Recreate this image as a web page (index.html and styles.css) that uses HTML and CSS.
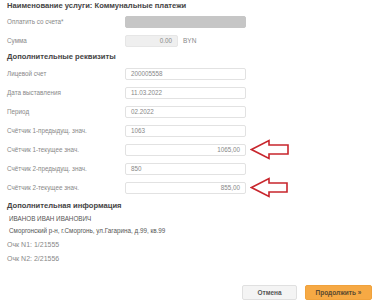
FILE: index.html
```html
<!DOCTYPE html>
<html lang="ru">
<head>
    <meta charset="UTF-8">
    <title>Коммунальные платежи</title>
    <link rel="stylesheet" href="styles.css">
</head>
<body>
    <div class="page">
        <h1 class="title">Наименование услуги: Коммунальные платежи</h1>

        <div class="row">
            <label>Оплатить со счета*</label>
            <div class="field field-select"></div>
        </div>
        <div class="row">
            <label>Сумма</label>
            <div class="field field-sum">0.00</div>
            <span class="currency">BYN</span>
        </div>

        <h2 class="section">Дополнительные реквизиты</h2>

        <div class="row">
            <label>Лицевой счет</label>
            <div class="field">200005558</div>
        </div>
        <div class="row">
            <label>Дата выставления</label>
            <div class="field">11.03.2022</div>
        </div>
        <div class="row">
            <label>Период</label>
            <div class="field">02.2022</div>
        </div>
        <div class="row">
            <label>Счётчик 1-предыдущ. знач.</label>
            <div class="field">1063</div>
        </div>
        <div class="row">
            <label>Счётчик 1-текущее знач.</label>
            <div class="field field-num">1065,00</div>
            <svg class="arrow" width="40" height="21" viewBox="0 0 40 21">
                <polygon points="1.5,10.5 19,1.5 19,6 38,6 38,15 19,15 19,19.5" />
            </svg>
        </div>
        <div class="row">
            <label>Счётчик 2-предыдущ. знач.</label>
            <div class="field">850</div>
        </div>
        <div class="row">
            <label>Счётчик 2-текущее знач.</label>
            <div class="field field-num">855,00</div>
            <svg class="arrow" width="40" height="21" viewBox="0 0 40 21">
                <polygon points="1.5,10.5 19,1.5 19,6 37,6 37,15 19,15 19,19.5" />
            </svg>
        </div>

        <h2 class="section section-info">Дополнительная информация</h2>
        <div class="info">
            <p class="info-line">ИВАНОВ ИВАН ИВАНОВИЧ</p>
            <p class="info-line">Сморгонский р-н, г.Сморгонь, ул.Гагарина, д.99, кв.99</p>
        </div>
        <p class="counter">Очк N1: 1/21555</p>
        <p class="counter">Очк N2: 2/21556</p>

        <div class="actions">
            <button type="button" class="btn btn-cancel">Отмена</button>
            <button type="button" class="btn btn-next">Продолжить »</button>
        </div>
    </div>
</body>
</html>
```

FILE: styles.css
```css
body {
    margin: 0;
    padding: 0;
    background: #fff;
    font-family: "Liberation Sans", Arial, sans-serif;
    color: #777;
}
.page {
    padding: 0 8px 0 7px;
}
.title, .section {
    margin: 0;
    font-size: 7.6px;
    font-weight: bold;
    color: #444;
}
.title {
    height: 12px;
    line-height: 12px;
}
.section {
    height: 14px;
    line-height: 14px;
    margin-top: 0;
}
.row {
    display: flex;
    align-items: center;
    height: 19px;
}
.row label {
    width: 118px;
    font-size: 6.3px;
    color: #888;
}
.field {
    box-sizing: border-box;
    width: 121px;
    height: 12px;
    line-height: 10px;
    padding: 0 5px;
    border: 1px solid #e2e2e2;
    border-radius: 2px;
    background: #fff;
    font-size: 6.3px;
    color: #888;
}
.field-select {
    background: #c6c6c6;
    border-color: #c6c6c6;
}
.field-sum {
    width: 53px;
    background: #efefef;
    border-color: #e6e6e6;
    text-align: right;
}
.field-num {
    text-align: right;
}
.currency {
    margin-left: 5px;
    font-size: 6.5px;
    color: #888;
}
.arrow {
    margin-left: 4px;
}
.arrow polygon {
    fill: #fff;
    stroke: #c8262d;
    stroke-width: 1.6;
    stroke-linejoin: miter;
}
.section-info {
    margin-top: 2px;
}
.info {
    padding-left: 2px;
}
.info-line {
    margin: 0;
    height: 12px;
    line-height: 12px;
    font-size: 6.3px;
    color: #555;
}
.counter {
    margin: 0;
    height: 14px;
    line-height: 14px;
    font-size: 7px;
    color: #888;
}
.counter:first-of-type {
    margin-top: 1px;
}
.actions {
    display: flex;
    justify-content: flex-end;
    gap: 8px;
    margin-top: 19px;
}
.btn {
    height: 15px;
    padding: 0;
    border-radius: 2px;
    font-family: "Liberation Sans", Arial, sans-serif;
    font-size: 6.5px;
    font-weight: bold;
    cursor: pointer;
}
.btn-cancel {
    width: 55px;
    background: #f4f4f4;
    border: 1px solid #e0e0e0;
    color: #555;
}
.btn-next {
    width: 67px;
    background: #f6a944;
    border: 1px solid #f0a23c;
    color: #5a4a30;
}
```
